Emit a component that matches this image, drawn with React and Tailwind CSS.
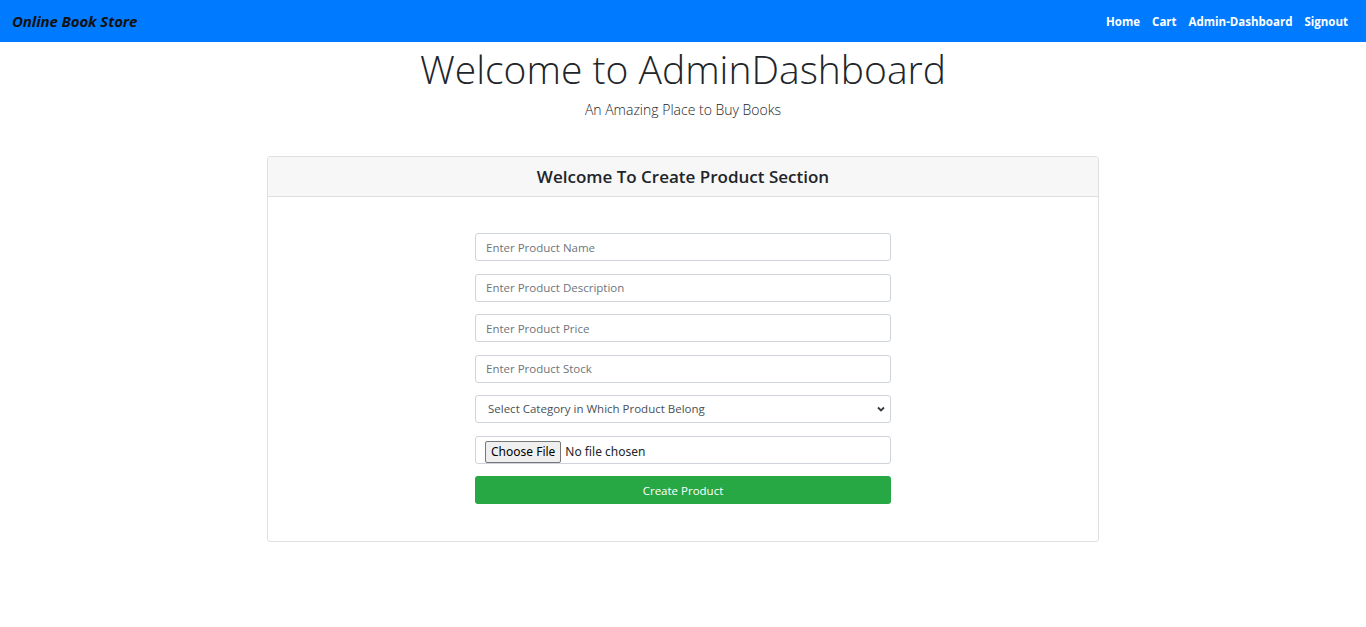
import { useState } from 'react'

const fields = [
  'Enter Product Name',
  'Enter Product Description',
  'Enter Product Price',
  'Enter Product Stock',
]

export default function App() {
  const [form, setForm] = useState({})

  return (
    <div className="min-h-screen bg-white font-['Open_Sans',sans-serif] text-[#212529]">
      <nav className="h-[42px] bg-[#007bff] flex items-center justify-between pl-3 pr-[18px]">
        <a className="text-[15px] font-bold italic text-[#111] tracking-[-0.1px]">Online Book Store</a>
        <ul className="flex items-center gap-3 text-[11.5px] font-bold text-white mt-[2px]">
          <li>Home</li>
          <li>Cart</li>
          <li>Admin-Dashboard</li>
          <li>Signout</li>
        </ul>
      </nav>

      <header className="text-center">
        <h1 className="text-[39px] font-light leading-[54px] text-[#212529]">Welcome to AdminDashboard</h1>
        <p className="text-[14px] font-light leading-5 mt-[4px] text-[#212529]">An Amazing Place to Buy Books</p>
      </header>

      <div className="mx-auto mt-[36px] w-[832px] border border-[#dfdfdf] rounded-[3px]">
        <div className="h-[40px] bg-[#f7f7f7] border-b border-[#dfdfdf] flex items-center justify-center">
          <h4 className="text-[17px] font-semibold text-[#212529] mt-[1px]">Welcome To Create Product Section</h4>
        </div>
        <form className="pt-[36px] pb-[37px] flex flex-col items-center gap-[12.5px]" onSubmit={(e) => e.preventDefault()}>
          {fields.map((f) => (
            <input
              key={f}
              placeholder={f}
              onChange={(e) => setForm({ ...form, [f]: e.target.value })}
              className="w-[416px] h-[28px] px-[10px] text-[11.5px] border border-[#ced4da] rounded-[3px] placeholder:text-[#6c757d] outline-none"
            />
          ))}
          <div className="relative w-[416px]">
            <select className="w-full h-[28px] pl-[12px] text-[11.5px] text-[#495057] border border-[#ced4da] rounded-[3px] appearance-none bg-white outline-none">
              <option>Select Category in Which Product Belong</option>
            </select>
            <svg className="absolute right-[5px] top-[10px] w-[10px] h-[8px]" viewBox="0 0 10 8">
              <path d="M2 2.5 L5 5.5 L8 2.5" fill="none" stroke="#343a40" strokeWidth="1.8" />
            </svg>
          </div>
          <div className="w-[416px] h-[28px] border border-[#ced4da] rounded-[3px] flex items-end pl-[9px] overflow-hidden">
            <input type="file" className="text-[12px] font-['Noto_Sans',sans-serif] file:h-[22px] file:mr-[4px] file:px-[5px] file:text-[12px] file:bg-[#efefef] file:border file:border-[#767676] file:rounded-[2px] file:text-black" />
          </div>
          <button className="w-[416px] h-[28px] bg-[#28a745] text-white text-[11.5px] rounded-[3px] pt-[2px]">Create Product</button>
        </form>
      </div>
    </div>
  )
}
